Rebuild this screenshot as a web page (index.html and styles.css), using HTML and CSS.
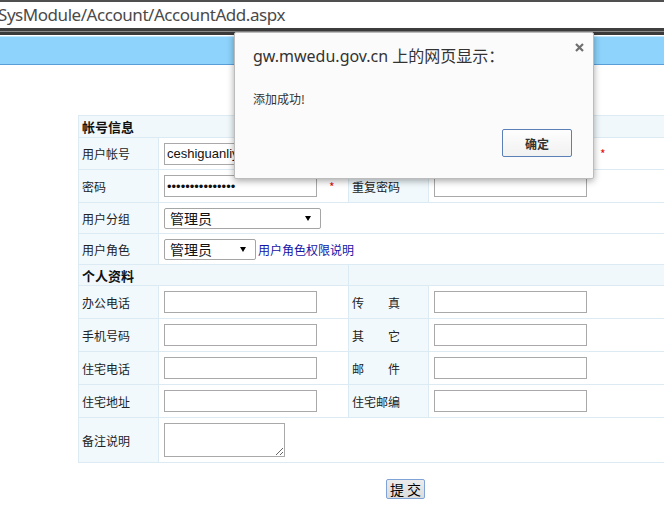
FILE: index.html
```html
<!DOCTYPE html>
<html lang="zh-CN">
<head>
<meta charset="utf-8">
<title>AccountAdd</title>
<link rel="stylesheet" href="styles.css">
</head>
<body>
<div class="addr"><span class="url">SysModule/Account/AccountAdd.aspx</span></div>
<div class="band"></div>
<div class="topbar"></div>
<div class="content">
  <table class="form">
    <colgroup><col class="c1"><col class="c2"><col class="c3"><col class="c4"></colgroup>
    <tr class="hd"><td colspan="2" class="hcell">帐号信息</td><td colspan="2" class="hcell"></td></tr>
    <tr class="r1">
      <td class="lab">用户帐号</td>
      <td class="val"><input class="txt" type="text" value="ceshiguanliyuan"></td>
      <td class="lab lab2">真实姓名</td>
      <td class="val"><input class="txt" type="text" value=""><span class="star star2">*</span></td>
    </tr>
    <tr class="r2">
      <td class="lab">密码</td>
      <td class="val"><input class="txt pwd" type="password" value="123456789012345"><span class="star">*</span></td>
      <td class="lab lab2">重复密码</td>
      <td class="val"><input class="txt" type="password" value=""></td>
    </tr>
    <tr class="rs">
      <td class="lab">用户分组</td>
      <td class="val" colspan="3"><div class="select sel1"><span>管理员</span><svg class="arr" width="6" height="5" viewBox="0 0 6 5"><path d="M0 0H6L3 5Z" fill="#000"/></svg></div></td>
    </tr>
    <tr class="rs">
      <td class="lab">用户角色</td>
      <td class="val" colspan="3"><div class="select sel2"><span>管理员</span><svg class="arr" width="6" height="5" viewBox="0 0 6 5"><path d="M0 0H6L3 5Z" fill="#000"/></svg></div><a class="link" href="#">用户角色权限说明</a></td>
    </tr>
    <tr class="hd2"><td colspan="2" class="hcell">个人资料</td><td colspan="2" class="hcell"></td></tr>
    <tr class="r">
      <td class="lab">办公电话</td>
      <td class="val"><input class="txt" type="text"></td>
      <td class="lab lab2">传　　真</td>
      <td class="val"><input class="txt" type="text"></td>
    </tr>
    <tr class="r">
      <td class="lab">手机号码</td>
      <td class="val"><input class="txt" type="text"></td>
      <td class="lab lab2">其　　它</td>
      <td class="val"><input class="txt" type="text"></td>
    </tr>
    <tr class="r">
      <td class="lab">住宅电话</td>
      <td class="val"><input class="txt" type="text"></td>
      <td class="lab lab2">邮　　件</td>
      <td class="val"><input class="txt" type="text"></td>
    </tr>
    <tr class="r">
      <td class="lab">住宅地址</td>
      <td class="val"><input class="txt" type="text"></td>
      <td class="lab lab2">住宅邮编</td>
      <td class="val"><input class="txt" type="text"></td>
    </tr>
    <tr class="rt">
      <td class="lab">备注说明</td>
      <td class="val" colspan="3"><textarea class="area"></textarea></td>
    </tr>
  </table>
  <div class="actions"><button class="submit" type="button">提 交</button></div>
</div>

<div class="dialog">
  <svg class="close" width="9" height="9" viewBox="0 0 9 9"><path d="M1 1L8 8M8 1L1 8" stroke="#6f6f6f" stroke-width="2.2" stroke-linecap="butt"/></svg>
  <div class="dtitle">gw.mwedu.gov.cn 上的网页显示：</div>
  <div class="dmsg">添加成功!</div>
  <div class="dfoot"><button class="ok" type="button">确定</button></div>
</div>
</body>
</html>
```

FILE: styles.css
```css
html, body {
  margin: 0;
  padding: 0;
  overflow: hidden;
  background: #fff;
}
body {
  width: 664px;
  height: 532px;
  position: relative;
  font-family: "Noto Sans CJK SC", sans-serif;
  font-size: 12px;
  color: #222;
}

.addr {
  height: 26px;
  border-top: 2px solid #505050;
  background: #fff;
  overflow: hidden;
  white-space: nowrap;
}
.url {
  display: block;
  margin-left: -2px;
  font-family: "Noto Sans", sans-serif;
  font-size: 17px;
  letter-spacing: -0.45px;
  line-height: 26px;
  color: #4a4a4a;
}
.band {
  height: 7px;
  background: linear-gradient(#3f3f3f 0, #3f3f3f 3px, #8a8a8a 3px, #8a8a8a 4px, #3a3a3a 4px, #3a3a3a 7px);
}
.topbar {
  margin-top: 1px;
  height: 27px;
  border-top: 1px solid #c0e7fd;
  border-bottom: 1px solid #5a9ed8;
  background: #8dd3fb;
}

.content {
  padding: 50px 0 0 78px;
}
.form {
  border-collapse: collapse;
  table-layout: fixed;
  width: 655px;
}
.c1 { width: 80px; }
.c2 { width: 190px; }
.c3 { width: 80px; }
.c4 { width: 305px; }

.form td {
  border: 1px solid #dceaf3;
  padding: 0;
  vertical-align: middle;
  white-space: nowrap;
}
.hd td { height: 21px; }
.hd2 td { height: 20px; }
.r1 td { height: 31px; }
.r2 td { height: 32px; }
.rs td { height: 30px; }
.r td { height: 32px; }
.rt td { height: 44px; }

.hcell {
  background: #f0f8fc;
  font-weight: bold;
  font-size: 13px;
  color: #111;
  padding-left: 3px !important;
}
.lab {
  background: #f1f9fd;
  padding-left: 3px !important;
  color: #222;
}
.lab2 {
  padding-left: 3px !important;
}
.val {
  background: #fff;
  padding-left: 5px !important;
}

.txt {
  box-sizing: border-box;
  width: 153px;
  height: 22px;
  margin: 0;
  padding: 0 2px;
  border: 1px solid #a9a9a9;
  font-family: "Liberation Sans", sans-serif;
  font-size: 13px;
  color: #111;
  vertical-align: middle;
  outline: none;
}
.pwd {
  font-size: 13px;
  letter-spacing: 0;
}
.star {
  color: #e01010;
  font-size: 12px;
  margin-left: 12px;
  vertical-align: middle;
}
.star2 {
  margin-left: 13px;
}

.select {
  box-sizing: border-box;
  display: inline-flex;
  align-items: center;
  justify-content: space-between;
  height: 21px;
  padding: 0 9px 0 5px;
  border: 1px solid #a5a5a5;
  border-radius: 2px;
  background: #fff;
  font-size: 14px;
  color: #111;
  vertical-align: middle;
}
.sel1 { width: 157px; }
.sel2 { width: 92px; }
.arr { display: block; }
.link {
  margin-left: 2px;
  color: #1414a6;
  text-decoration: none;
  font-size: 12px;
  vertical-align: middle;
}

.area {
  box-sizing: border-box;
  width: 121px;
  height: 34px;
  margin: 0;
  border: 1px solid #a9a9a9;
  vertical-align: middle;
  display: inline-block;
}

.actions {
  width: 655px;
  text-align: center;
  padding-top: 16px;
}
.submit {
  box-sizing: border-box;
  width: 39px;
  height: 20px;
  margin: 0;
  padding: 0;
  border: 1px solid #7fa3d6;
  border-radius: 2px;
  background: linear-gradient(#ececec, #dcdcdc);
  font-family: "Noto Sans CJK SC", sans-serif;
  font-size: 14px;
  line-height: 18px;
  color: #000;
}

.dialog {
  position: absolute;
  left: 234px;
  top: 32px;
  width: 319px;
  height: 145px;
  border: 1px solid #bcbcbc;
  border-radius: 2px;
  background: #fbfbfb;
  box-shadow: 0 2px 7px rgba(0, 0, 0, 0.35);
  padding: 0 21px 0 18px;
  box-sizing: content-box;
}
.close {
  position: absolute;
  left: 340px;
  top: 10px;
}
.dtitle {
  margin-top: 13px;
  font-family: "Noto Sans", "Noto Sans CJK SC", sans-serif;
  font-size: 16px;
  line-height: 20px;
  color: #333;
}
.dmsg {
  margin-top: 25px;
  font-size: 12px;
  line-height: 16px;
  color: #333;
}
.dfoot {
  display: flex;
  justify-content: flex-end;
  margin-top: 22px;
}
.ok {
  box-sizing: border-box;
  width: 70px;
  height: 28px;
  margin: 0;
  border: 1px solid #5b80b8;
  border-radius: 2px;
  background: linear-gradient(#fefefe, #f1f1f1);
  font-family: "Noto Sans CJK SC", sans-serif;
  font-size: 12px;
  font-weight: bold;
  color: #333;
}
```
